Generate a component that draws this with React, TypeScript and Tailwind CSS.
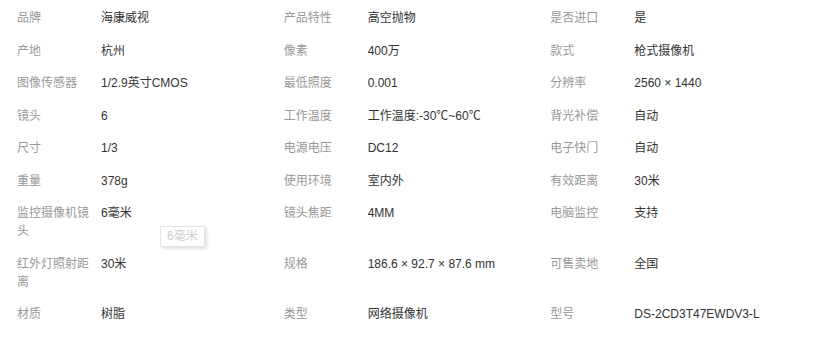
import React from "react";

const rows: [string, string][][] = [
  [["品牌", "海康威视"], ["产品特性", "高空抛物"], ["是否进口", "是"]],
  [["产地", "杭州"], ["像素", "400万"], ["款式", "枪式摄像机"]],
  [["图像传感器", "1/2.9英寸CMOS"], ["最低照度", "0.001"], ["分辨率", "2560 × 1440"]],
  [["镜头", "6"], ["工作温度", "工作温度:-30℃~60℃"], ["背光补偿", "自动"]],
  [["尺寸", "1/3"], ["电源电压", "DC12"], ["电子快门", "自动"]],
  [["重量", "378g"], ["使用环境", "室内外"], ["有效距离", "30米"]],
  [["监控摄像机镜头", "6毫米"], ["镜头焦距", "4MM"], ["电脑监控", "支持"]],
  [["红外灯照射距离", "30米"], ["规格", "186.6 × 92.7 × 87.6 mm"], ["可售卖地", "全国"]],
  [["材质", "树脂"], ["类型", "网络摄像机"], ["型号", "DS-2CD3T47EWDV3-L"]],
];

export default function App() {
  return (
    <div
      className="relative w-[829px] h-[343px] bg-white overflow-hidden"
      style={{ fontFamily: '"Liberation Sans", Arial, "Noto Sans CJK SC", sans-serif' }}
    >
      <div className="pl-[17px] pt-[2px] w-[817px] grid grid-cols-3 text-[12px] leading-[18px]">
        {rows.flat().map(([k, v], i) => (
          <div key={i} className="flex pt-[7px] pb-[7.5px]">
            <div className="w-[84px] shrink-0 pr-[10px] text-[#999999]">{k}</div>
            <div className="flex-1 text-[#333333]">{v}</div>
          </div>
        ))}
      </div>
      <div className="absolute left-[160px] top-[226px] h-[21px] px-[6px] border border-[#e3e3e3] bg-white text-[12px] leading-[19px] text-[#d0d0d0] shadow-[2px_2px_3px_rgba(0,0,0,0.12)]"
        style={{ fontFamily: '"Liberation Sans", Arial, "Noto Sans CJK SC", sans-serif' }}>
        6毫米
      </div>
    </div>
  );
}
